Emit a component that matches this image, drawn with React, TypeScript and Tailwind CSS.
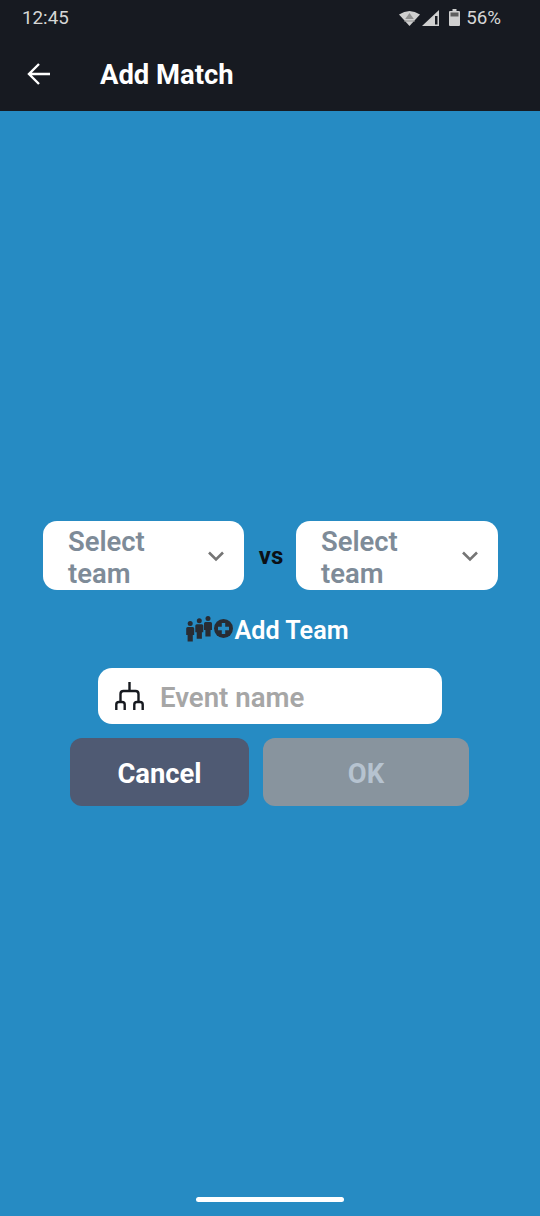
import React from "react";

function Chevron() {
  return (
    <svg width="18" height="12" viewBox="0 0 18 12" fill="none" className="shrink-0 mt-[2px]">
      <path d="M2 2.5 L9 9.5 L16 2.5" stroke="#757575" strokeWidth="2.6" />
    </svg>
  );
}

function TeamSelect({ w }: { w: string }) {
  return (
    <div className={`${w} h-[69px] bg-white rounded-[14px] flex items-center pl-[25px] pr-[19px]`}>
      <div className="flex-1 pt-[5px] text-[27.4px] leading-[32px] font-semibold text-[#7e8b98]">
        Select<br />team
      </div>
      <Chevron />
    </div>
  );
}

function People() {
  const Person = ({ x, y }: { x: number; y: number }) => (
    <g fill="#282c33" transform={`translate(${x} ${y})`}>
      <circle cx="4" cy="2.5" r="2.5" />
      <path d="M1.5 6 H6.5 Q8 6 8 7.5 V14 H6.6 V20.5 H1.4 V14 H0 V7.5 Q0 6 1.5 6 Z" />
    </g>
  );
  return (
    <svg width="48" height="26" viewBox="0 0 48 26" className="shrink-0">
      <Person x={0.2} y={5} />
      <Person x={9.3} y={2.3} />
      <Person x={18} y={0} />
      <circle cx="37.5" cy="12.5" r="9.5" fill="#282c33" />
      <path d="M37.5 7 V18 M32 12.5 H43" stroke="#268bc3" strokeWidth="3.4" />
    </svg>
  );
}

export default function App() {
  return (
    <div className="w-[540px] h-[1216px] flex flex-col bg-[#268bc3] font-['Roboto',sans-serif] overflow-hidden">
      <header className="h-[111px] bg-[#171a21] shrink-0 flex flex-col">
        <div className="h-[36px] pt-[1px] flex items-center justify-between pl-[22px] pr-[39px] text-[#d6d6d6] text-[18.8px]">
          <span>12:45</span>
          <div className="flex items-center">
            <svg width="21" height="16" viewBox="0 0 21 16" className="-mt-[2px]">
              <path d="M0 4.5 Q10.5 -2.5 21 4.5 L10.5 16 Z" fill="#cfcfcf" />
              <path d="M6.2 9 L10.5 3 L14.8 9 Z" fill="#8f8f8f" />
              <path d="M5 11 H16" stroke="#8f8f8f" strokeWidth="1" />
            </svg>
            <svg width="17" height="16" viewBox="0 0 17 16" className="ml-[2px] mr-[10px] -mt-[2px]">
              <path d="M17 0 V16 H0 Z" fill="#cfcfcf" />
              <path d="M13 6 H15.5 V14.5 H13 Z" fill="#171a21" />
            </svg>
            <svg width="11" height="17" viewBox="0 0 11 17" className="mr-[6px] -mt-[3px]">
              <path d="M3.5 0 H7.5 V2 H10 Q11 2 11 3 V16 Q11 17 10 17 H1 Q0 17 0 16 V3 Q0 2 1 2 H3.5 Z" fill="#cfcfcf" />
              <path d="M1.5 3.5 H9.5 V7.5 H1.5 Z" fill="#5e5e5e" />
            </svg>
            <span>56%</span>
          </div>
        </div>
        <div className="flex-1 flex items-center pl-[27px]">
          <svg width="24" height="24" viewBox="0 0 24 24" fill="none" className="shrink-0">
            <path d="M23 12 H2.5 M12 2 L2 12 L12 22" stroke="#ffffff" strokeWidth="2.4" />
          </svg>
          <h1 className="ml-[49px] pt-[2px] text-[27.4px] leading-[32px] font-bold text-white">Add Match</h1>
        </div>
      </header>

      <main className="flex-1 flex flex-col items-center justify-center">
        <div className="w-full pl-[43px] pr-[42px] flex items-center">
          <TeamSelect w="w-[201px]" />
          <span className="w-[52px] pl-[2px] pt-[2px] text-center text-[24px] font-bold text-[#0b1016] leading-none">vs</span>
          <TeamSelect w="w-[202px]" />
        </div>

        <div className="mt-[26px] mr-[5px] h-[27px] flex items-center">
          <People />
          <span className="pt-[2px] text-[25.2px] leading-[27px] font-semibold text-white">Add Team</span>
        </div>

        <div className="mt-[25px] w-[344px] h-[56px] bg-white rounded-[14px] flex items-center pl-[17px]">
          <svg width="30" height="30" viewBox="0 0 30 30" fill="none" className="shrink-0">
            <path d="M14.5 1 V10 M5.5 20 V13 Q5.5 10 8.5 10 H20.5 Q23.5 10 23.5 13 V20 M1.3 29 V23.5 Q1.3 21 4 21 H7 Q9.7 21 9.7 23.5 V29 M19.3 29 V23.5 Q19.3 21 22 21 H25 Q27.7 21 27.7 23.5 V29" stroke="#16191f" strokeWidth="2.4" />
          </svg>
          <span className="ml-[15px] pt-[4px] text-[27.6px] leading-[32px] font-semibold text-[#a6a6a6]">Event name</span>
        </div>

        <div className="mt-[14px] mb-[1px] mr-[1px] flex gap-[14px]">
          <button className="w-[179px] h-[68px] pt-[6px] rounded-[12px] bg-[#4f5a73] text-white text-[27.4px] font-bold">Cancel</button>
          <button className="w-[206px] h-[68px] pt-[6px] rounded-[12px] bg-[#88949e] text-[#b6c3d0] text-[27.4px] font-bold">OK</button>
        </div>
      </main>

      <div className="h-0 flex justify-center overflow-visible">
        <div className="w-[148px] h-[5px] rounded-full bg-white -translate-y-[19px] shrink-0" />
      </div>
    </div>
  );
}
